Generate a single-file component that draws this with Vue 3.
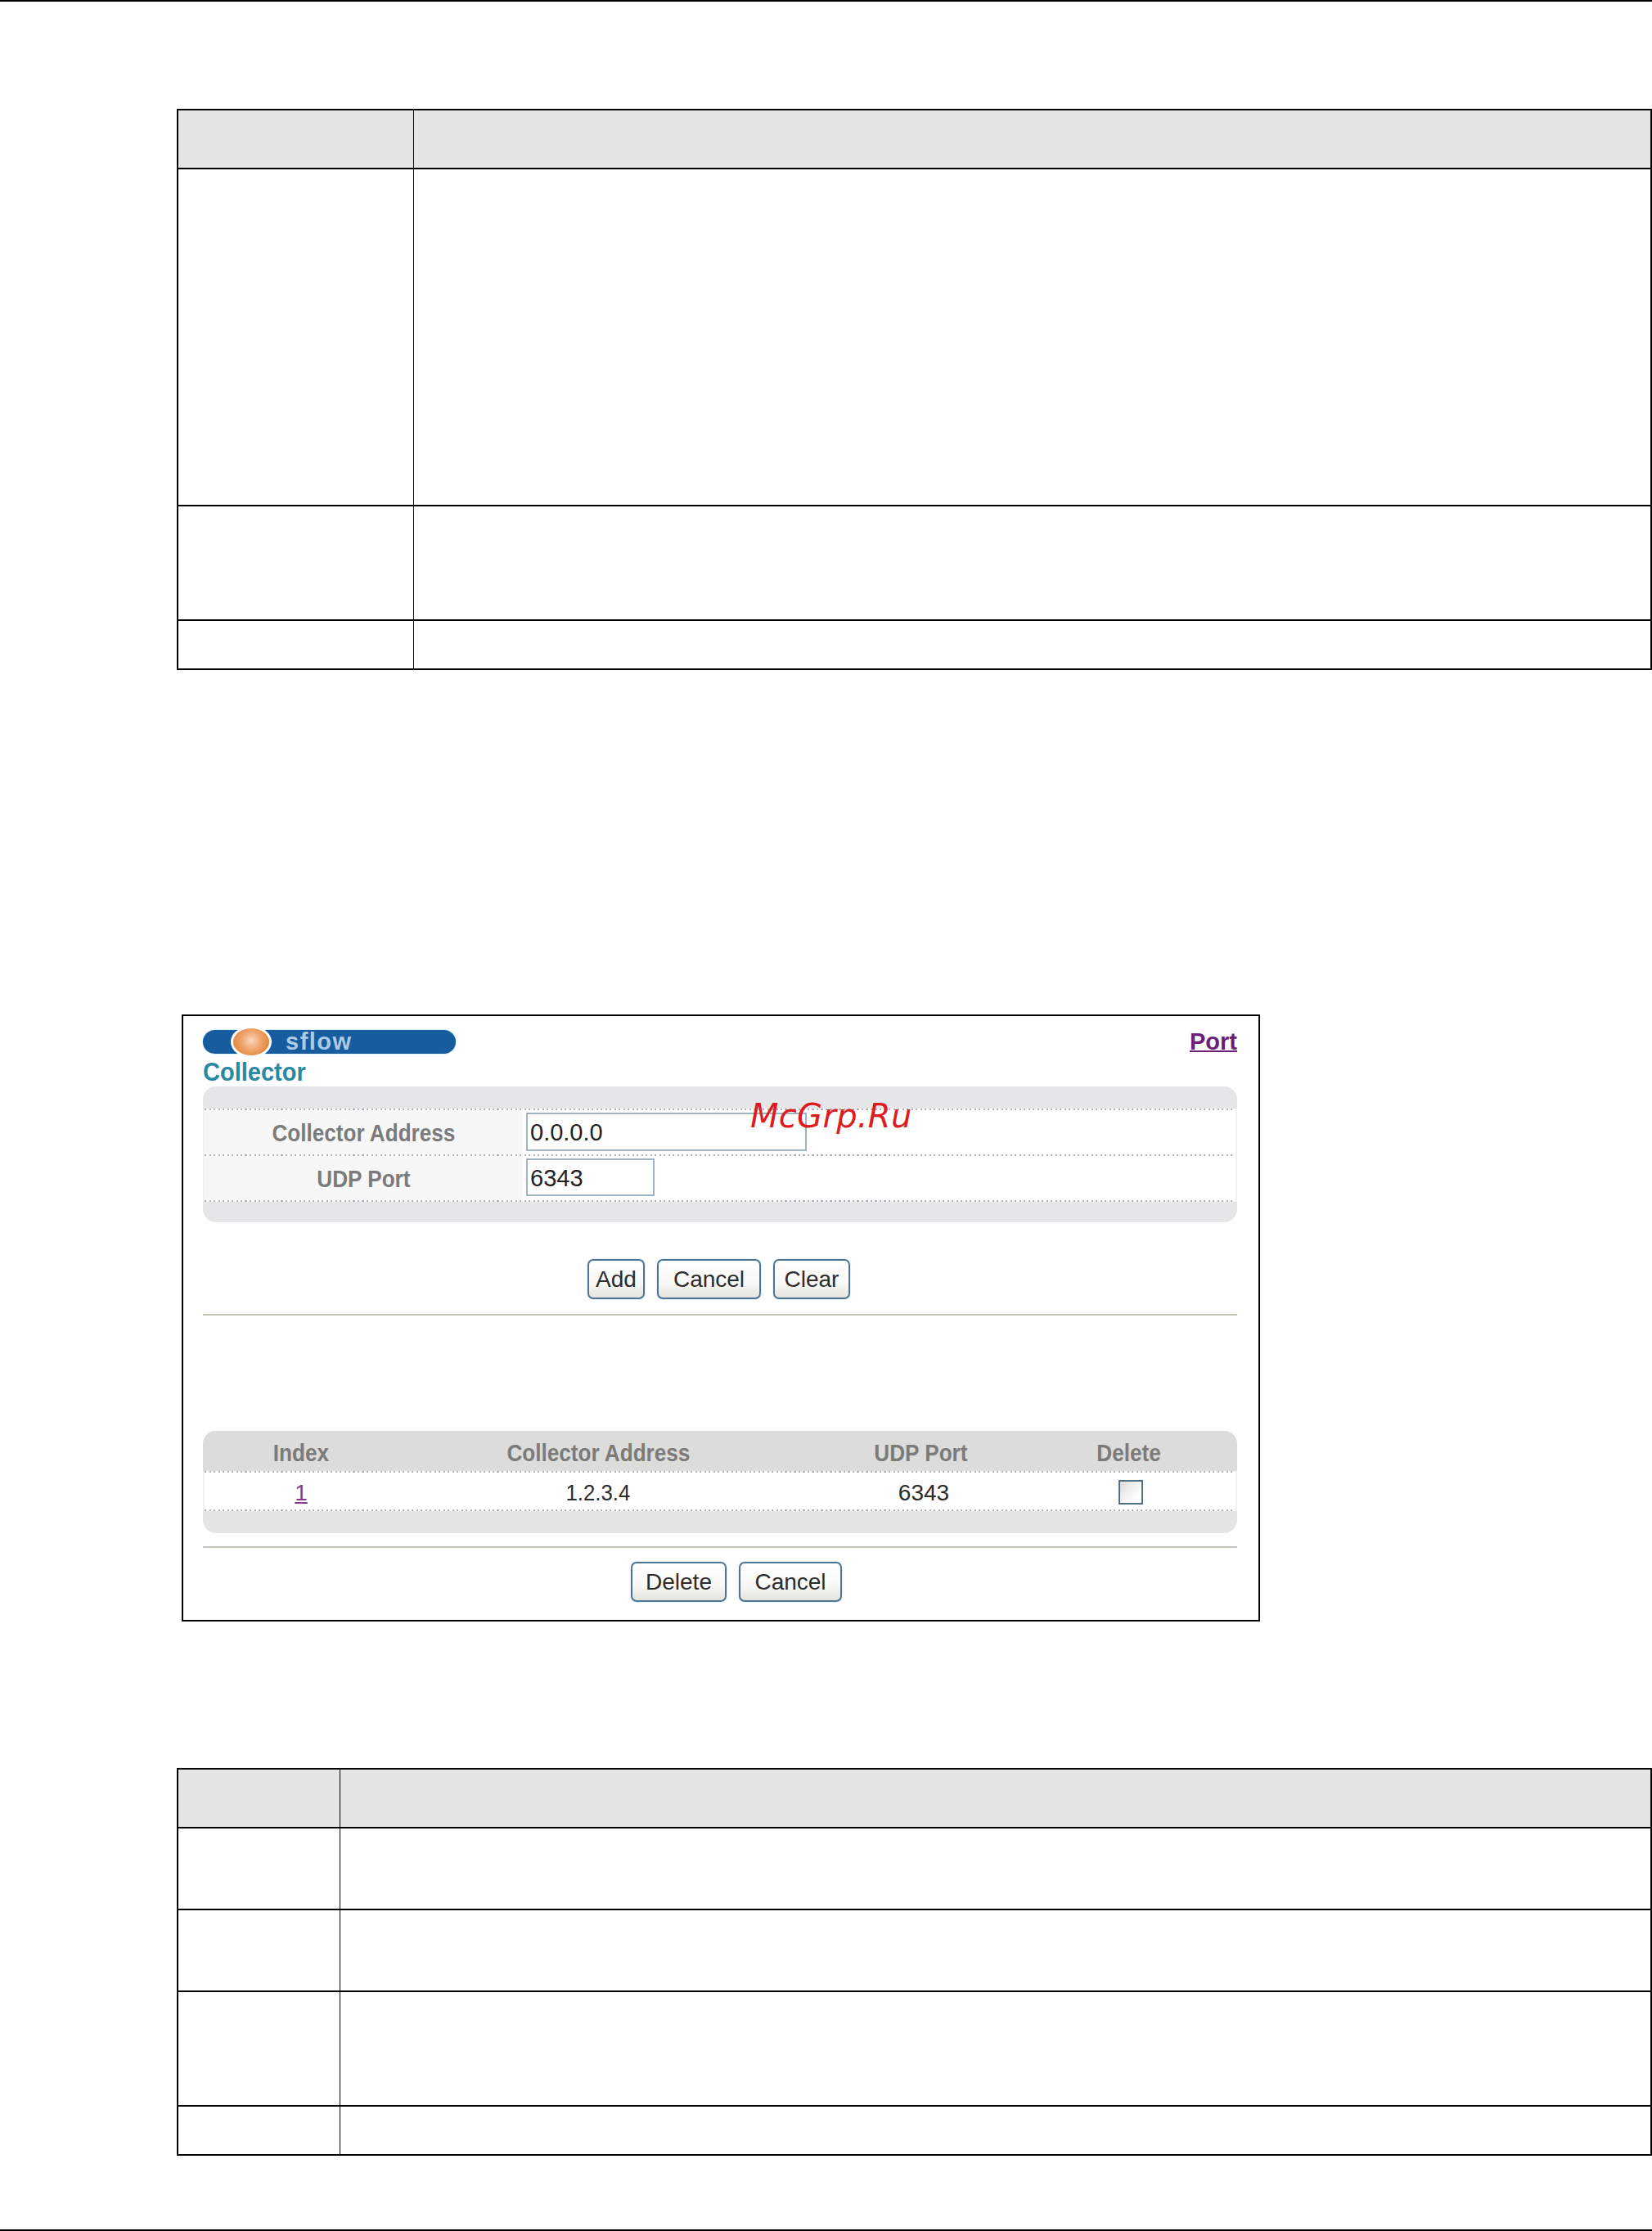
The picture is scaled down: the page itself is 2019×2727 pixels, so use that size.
<script setup>
const docTableA = {
  first: 'col-wide',
  rows: ['row-a1', 'row-a2', 'row-a3'],
}
const docTableB = {
  first: 'col-narrow',
  rows: ['row-b1', 'row-b2', 'row-b3', 'row-b4'],
}
</script>

<template>
  <div class="page">
    <div class="rule"></div>

    <div class="doc-table table-a">
      <div class="doc-row head row-head">
        <div class="doc-cell" :class="docTableA.first"></div>
        <div class="doc-cell grow"></div>
      </div>
      <div v-for="r in docTableA.rows" :key="r" class="doc-row" :class="r">
        <div class="doc-cell" :class="docTableA.first"></div>
        <div class="doc-cell grow"></div>
      </div>
    </div>

    <div class="shot">
      <span class="watermark">McGrp.Ru</span>

      <div class="title-bar">
        <div class="pill">
          <span class="ball"></span>
          <span class="pill-text">sflow</span>
        </div>
        <a class="port-link">Port</a>
      </div>
      <div class="subtitle">Collector</div>

      <div class="panel form-panel">
        <div class="form-row">
          <div class="form-label"><span class="squeeze">Collector Address</span></div>
          <div class="form-field"><div class="input input-long">0.0.0.0</div></div>
        </div>
        <div class="form-row last">
          <div class="form-label"><span class="squeeze">UDP Port</span></div>
          <div class="form-field"><div class="input input-short">6343</div></div>
        </div>
      </div>

      <div class="buttons buttons-top">
        <button class="btn btn-add">Add</button>
        <button class="btn btn-cancel">Cancel</button>
        <button class="btn btn-clear">Clear</button>
      </div>
      <div class="divider divider-top"></div>

      <div class="panel list-panel">
        <div class="list-row list-head">
          <div class="c-index"><span class="squeeze">Index</span></div>
          <div class="c-addr"><span class="squeeze">Collector Address</span></div>
          <div class="c-port"><span class="squeeze">UDP Port</span></div>
          <div class="c-del"><span class="squeeze">Delete</span></div>
        </div>
        <div class="list-row list-body">
          <div class="c-index"><a class="idx-link">1</a></div>
          <div class="c-addr"><span class="squeeze-light">1.2.3.4</span></div>
          <div class="c-port nudge">6343</div>
          <div class="c-del"><span class="check"></span></div>
        </div>
      </div>
      <div class="divider divider-bottom"></div>

      <div class="buttons buttons-bottom">
        <button class="btn btn-delete">Delete</button>
        <button class="btn btn-cancel2">Cancel</button>
      </div>
    </div>

    <div class="doc-table table-b">
      <div class="doc-row head row-head">
        <div class="doc-cell" :class="docTableB.first"></div>
        <div class="doc-cell grow"></div>
      </div>
      <div v-for="r in docTableB.rows" :key="r" class="doc-row" :class="r">
        <div class="doc-cell" :class="docTableB.first"></div>
        <div class="doc-cell grow"></div>
      </div>
    </div>

    <div class="spacer"></div>
    <div class="rule"></div>
  </div>
</template>

<style scoped>
.page {
  width: 2019px;
  height: 2727px;
  display: flex;
  flex-direction: column;
  background: #fff;
  font-family: "Liberation Sans", Arial, sans-serif;
  overflow: hidden;
}
.rule { height: 2px; background: #000; flex: none; }
.spacer { flex: 1; }

.doc-table {
  flex: none;
  width: 1803px;
  margin-left: 216px;
  box-sizing: border-box;
  border: 2px solid #000;
  border-bottom: 0;
}
.table-a { margin-top: 131px; }
.table-b { margin-top: 179px; }
.doc-row { display: flex; box-sizing: border-box; border-bottom: 2px solid #000; }
.head { background: #e5e5e5; }
.doc-cell { box-sizing: border-box; height: 100%; }
.col-wide { width: 288px; border-right: 1px solid #000; }
.col-narrow { width: 198px; border-right: 1px solid #000; }
.grow { flex: 1; }
.row-head { height: 72px; }
.row-a1 { height: 412px; }
.row-a2 { height: 140px; }
.row-a3 { height: 60px; }
.row-b1 { height: 100px; }
.row-b2 { height: 100px; }
.row-b3 { height: 140px; }
.row-b4 { height: 60px; }

.shot {
  flex: none;
  position: relative;
  box-sizing: border-box;
  width: 1318px;
  height: 742px;
  margin: 421px 0 0 222px;
  border: 2px solid #000;
  padding: 0 26px 0 24px;
}
.watermark {
  position: absolute;
  left: 693px;
  top: 98px;
  font-family: "DejaVu Sans", sans-serif;
  font-style: italic;
  font-size: 40px;
  letter-spacing: 0.3px;
  line-height: 48px;
  color: #dc1c20;
  white-space: nowrap;
  z-index: 2;
}

.title-bar {
  box-sizing: border-box;
  display: flex;
  align-items: flex-start;
  justify-content: space-between;
  padding-top: 17px;
  height: 55px;
}
.pill {
  position: relative;
  width: 309px;
  height: 29px;
  border-radius: 15px;
  background: #175c9e;
  box-shadow: 0 0 2px #8fd0e8;
  display: flex;
  align-items: center;
}
.ball {
  position: absolute;
  left: 34px;
  top: -5px;
  width: 50px;
  height: 39px;
  box-sizing: border-box;
  border-radius: 50%;
  border: 3px solid #fff;
  background: radial-gradient(circle at 50% 45%, #f9d9bd 0%, #f0a66f 40%, #e2853a 80%, #d97a30 100%);
}
.pill-text {
  margin-left: 101px;
  font-size: 29px;
  font-weight: 700;
  letter-spacing: 1.5px;
  line-height: 29px;
  color: #a8cbe6;
}
.port-link {
  font-size: 29px;
  font-weight: 700;
  line-height: 28px;
  color: #6b1f78;
  text-decoration: underline;
  text-decoration-thickness: 2px;
}
.subtitle {
  height: 29px;
  font-size: 29px;
  line-height: 29px;
  font-weight: 700;
  color: #2b88a2;
  transform: scaleY(1.08);
  transform-origin: 0 85%;
}

.panel {
  box-sizing: border-box;
  border-radius: 16px;
  background: #e6e6e8;
}
.form-panel {
  margin-top: 2px;
  height: 166px;
  padding-top: 27px;
}
.form-row {
  box-sizing: border-box;
  display: flex;
  height: 56px;
  padding-top: 2px;
  border-left: 2px solid #f1f1f3;
  border-right: 2px solid #f1f1f3;
  background-color: #fff;
  background-image: repeating-linear-gradient(90deg, #aeb2b6 0 2px, transparent 2px 5.5px);
  background-size: 100% 2px;
  background-repeat: no-repeat;
  background-position: 0 0;
}
.form-row.last {
  height: 58px;
  padding-bottom: 2px;
  background-image:
    repeating-linear-gradient(90deg, #aeb2b6 0 2px, transparent 2px 5.5px),
    repeating-linear-gradient(90deg, #aeb2b6 0 2px, transparent 2px 5.5px);
  background-position: 0 0, 0 100%;
}
.form-label {
  width: 389px;
  flex: none;
  background: #f7f7f7;
  text-align: center;
  font-size: 29px;
  font-weight: 700;
  line-height: 56px;
  color: #7b7b7b;
}
.squeeze {
  display: inline-block;
  transform: scaleX(0.9);
  white-space: nowrap;
}
.form-field { flex: 1; padding-left: 4px; }
.input {
  box-sizing: border-box;
  height: 46px;
  margin-top: 3px;
  background: #fff;
  border: 2px solid #9fb4c2;
  padding-left: 3px;
  font-size: 29px;
  line-height: 44px;
  color: #222;
}
.input-long { width: 343px; height: 47px; }
.input-short { width: 157px; }

.buttons { display: flex; }
.buttons-top { margin-top: 45px; padding-left: 470px; }
.buttons-bottom { margin-top: 17px; padding-left: 523px; }
.btn {
  box-sizing: border-box;
  height: 49px;
  padding: 0;
  border: 2px solid #4d7595;
  border-radius: 7px;
  background: linear-gradient(#fff 0%, #f8f8f6 60%, #e4e4dc 100%);
  box-shadow: 0 0 2px #a9cbdc;
  font-family: inherit;
  font-size: 28px;
  line-height: 44px;
  color: #2c2c2c;
}
.btn-add { width: 70px; }
.btn-cancel { width: 127px; margin-left: 15px; }
.btn-clear { width: 94px; margin-left: 15px; }
.btn-delete { width: 117px; }
.btn-cancel2 { width: 126px; margin-left: 15px; }

.divider { height: 2px; background: #c4c4b6; }
.divider-top { margin-top: 18px; }
.divider-bottom { margin-top: 16px; }

.list-panel {
  margin-top: 141px;
  height: 125px;
  overflow: hidden;
  background: #e5e5e5;
}
.list-row {
  box-sizing: border-box;
  display: flex;
  text-align: center;
  white-space: nowrap;
}
.list-head {
  height: 49px;
  padding: 0 2px;
  background: #dcdcda;
  font-size: 29px;
  font-weight: 700;
  line-height: 54px;
  color: #7b7b7b;
}
.list-body {
  height: 49px;
  padding: 2px 0;
  border-left: 2px solid #f1f1f1;
  border-right: 2px solid #f1f1f1;
  background-color: #fff;
  background-image:
    repeating-linear-gradient(90deg, #aeb2b6 0 2px, transparent 2px 5.5px),
    repeating-linear-gradient(90deg, #aeb2b6 0 2px, transparent 2px 5.5px);
  background-size: 100% 2px;
  background-repeat: no-repeat;
  background-position: 0 0, 0 100%;
  font-size: 28px;
  line-height: 49px;
  color: #2c2c2c;
}
.squeeze-light {
  display: inline-block;
  transform: scaleX(0.92);
}
.c-index { width: 236px; }
.c-addr { width: 490px; }
.c-port { width: 298px; }
.c-del { width: 212px; }
.nudge { padding-left: 8px; box-sizing: border-box; }
.idx-link { color: #8a3a8e; text-decoration: underline; }
.check {
  display: block;
  box-sizing: border-box;
  width: 30px;
  height: 30px;
  margin: 9px auto 0;
  position: relative;
  left: 2px;
  border: 2px solid #4f7086;
  background: linear-gradient(135deg, #dcddd6, #fff 75%);
}
</style>
